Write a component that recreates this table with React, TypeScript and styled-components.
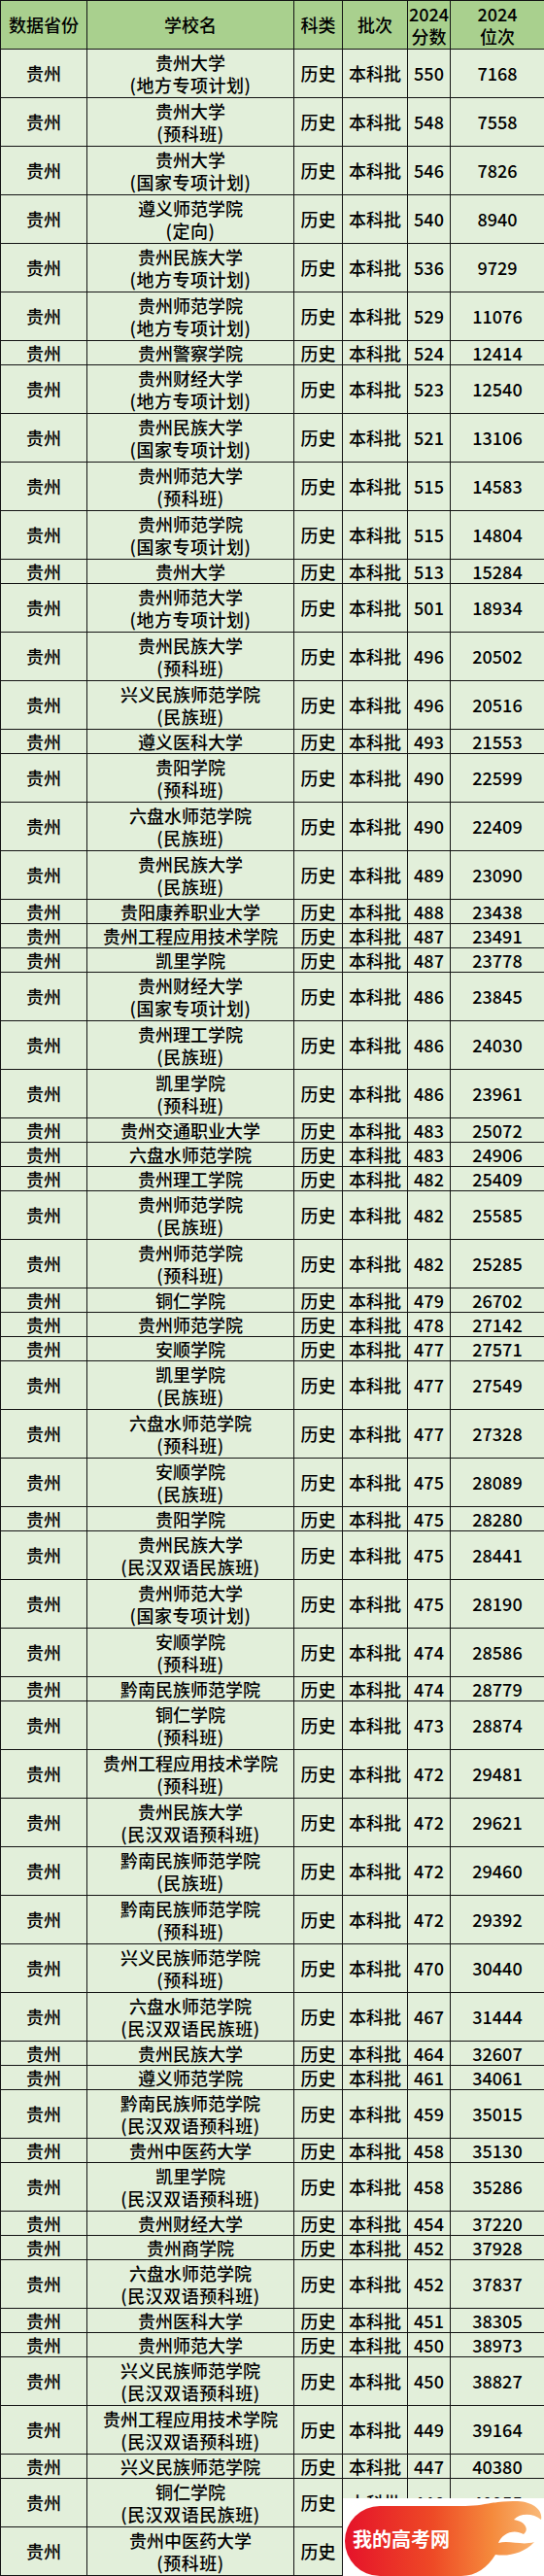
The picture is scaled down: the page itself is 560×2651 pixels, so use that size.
import styled, { createGlobalStyle } from "styled-components";

const GlobalStyle = createGlobalStyle`
  html, body {
    margin: 0;
    padding: 0;
    background: #ffffff;
  }
  body {
    font-family: "Noto Sans CJK SC", "Noto Sans", sans-serif;
    color: #000;
  }
`;

const Page = styled.div`
  position: relative;
  width: 560px;
`;

const Table = styled.div`
  display: flex;
  flex-direction: column;
  gap: 1px;
  padding: 1px 0 1px 1px;
  background: #141414;
`;

const Row = styled.div<{ $tall: boolean }>`
  display: grid;
  grid-template-columns: 88px 212px 49px 66px 43px 96px;
  column-gap: 1px;
  height: ${(p) => (p.$tall ? 49 : 24)}px;
`;

const Cell = styled.div<{ $head?: boolean }>`
  display: flex;
  flex-direction: column;
  align-items: center;
  justify-content: center;
  text-align: center;
  background: ${(p) => (p.$head ? "#a9d08e" : "#e2efda")};
  font-size: 18px;
  font-weight: 500;
  line-height: 23px;
  white-space: nowrap;
  overflow: hidden;
`;

const Note = styled.span`
  letter-spacing: 0.5px;
`;

const Logo = styled.div`
  position: absolute;
  right: 0;
  bottom: 0;
  width: 207px;
  height: 80px;
  background: #ffffff;
`;

type School = [string, string | null, string, string];

const rows: School[] = [
  ["贵州大学", "(地方专项计划)", "550", "7168"],
  ["贵州大学", "(预科班)", "548", "7558"],
  ["贵州大学", "(国家专项计划)", "546", "7826"],
  ["遵义师范学院", "(定向)", "540", "8940"],
  ["贵州民族大学", "(地方专项计划)", "536", "9729"],
  ["贵州师范学院", "(地方专项计划)", "529", "11076"],
  ["贵州警察学院", null, "524", "12414"],
  ["贵州财经大学", "(地方专项计划)", "523", "12540"],
  ["贵州民族大学", "(国家专项计划)", "521", "13106"],
  ["贵州师范大学", "(预科班)", "515", "14583"],
  ["贵州师范学院", "(国家专项计划)", "515", "14804"],
  ["贵州大学", null, "513", "15284"],
  ["贵州师范大学", "(地方专项计划)", "501", "18934"],
  ["贵州民族大学", "(预科班)", "496", "20502"],
  ["兴义民族师范学院", "(民族班)", "496", "20516"],
  ["遵义医科大学", null, "493", "21553"],
  ["贵阳学院", "(预科班)", "490", "22599"],
  ["六盘水师范学院", "(民族班)", "490", "22409"],
  ["贵州民族大学", "(民族班)", "489", "23090"],
  ["贵阳康养职业大学", null, "488", "23438"],
  ["贵州工程应用技术学院", null, "487", "23491"],
  ["凯里学院", null, "487", "23778"],
  ["贵州财经大学", "(国家专项计划)", "486", "23845"],
  ["贵州理工学院", "(民族班)", "486", "24030"],
  ["凯里学院", "(预科班)", "486", "23961"],
  ["贵州交通职业大学", null, "483", "25072"],
  ["六盘水师范学院", null, "483", "24906"],
  ["贵州理工学院", null, "482", "25409"],
  ["贵州师范学院", "(民族班)", "482", "25585"],
  ["贵州师范学院", "(预科班)", "482", "25285"],
  ["铜仁学院", null, "479", "26702"],
  ["贵州师范学院", null, "478", "27142"],
  ["安顺学院", null, "477", "27571"],
  ["凯里学院", "(民族班)", "477", "27549"],
  ["六盘水师范学院", "(预科班)", "477", "27328"],
  ["安顺学院", "(民族班)", "475", "28089"],
  ["贵阳学院", null, "475", "28280"],
  ["贵州民族大学", "(民汉双语民族班)", "475", "28441"],
  ["贵州师范大学", "(国家专项计划)", "475", "28190"],
  ["安顺学院", "(预科班)", "474", "28586"],
  ["黔南民族师范学院", null, "474", "28779"],
  ["铜仁学院", "(预科班)", "473", "28874"],
  ["贵州工程应用技术学院", "(预科班)", "472", "29481"],
  ["贵州民族大学", "(民汉双语预科班)", "472", "29621"],
  ["黔南民族师范学院", "(民族班)", "472", "29460"],
  ["黔南民族师范学院", "(预科班)", "472", "29392"],
  ["兴义民族师范学院", "(预科班)", "470", "30440"],
  ["六盘水师范学院", "(民汉双语民族班)", "467", "31444"],
  ["贵州民族大学", null, "464", "32607"],
  ["遵义师范学院", null, "461", "34061"],
  ["黔南民族师范学院", "(民汉双语预科班)", "459", "35015"],
  ["贵州中医药大学", null, "458", "35130"],
  ["凯里学院", "(民汉双语预科班)", "458", "35286"],
  ["贵州财经大学", null, "454", "37220"],
  ["贵州商学院", null, "452", "37928"],
  ["六盘水师范学院", "(民汉双语预科班)", "452", "37837"],
  ["贵州医科大学", null, "451", "38305"],
  ["贵州师范大学", null, "450", "38973"],
  ["兴义民族师范学院", "(民汉双语预科班)", "450", "38827"],
  ["贵州工程应用技术学院", "(民汉双语预科班)", "449", "39164"],
  ["兴义民族师范学院", null, "447", "40380"],
  ["铜仁学院", "(民汉双语民族班)", "446", "40955"],
  ["贵州中医药大学", "(预科班)", "445", "41366"],
];

const LogoMark = () => (
  <svg width="207" height="80" viewBox="0 0 207 80">
    <defs>
      <linearGradient id="flame" x1="0" y1="0" x2="1" y2="0">
        <stop offset="0" stopColor="#e5122a" />
        <stop offset="0.45" stopColor="#ee4a26" />
        <stop offset="0.75" stopColor="#f58a3c" />
        <stop offset="1" stopColor="#f9b978" />
      </linearGradient>
    </defs>
    <path
      d="M38 8 L126 8 C146 8 158 2 180 3 C196 4 206 12 204 22 C196 15 182 15 176 22 C188 24 192 32 186 37 C176 31 164 36 160 46 C172 43 184 49 197 45 C186 57 170 60 157 58 C149 71 137 80 122 80 L38 80 A36 36 0 0 1 38 8 Z"
      fill="url(#flame)"
    />
    <text
      x="60"
      y="50"
      textAnchor="middle"
      fontFamily="'Noto Sans CJK SC', sans-serif"
      fontWeight="700"
      fontSize="20"
      fill="#ffffff"
    >
      我的高考网
    </text>
  </svg>
);

const App = () => {
  return (
    <Page>
      <GlobalStyle />
      <Table>
        <Row $tall>
          <Cell $head>数据省份</Cell>
          <Cell $head>学校名</Cell>
          <Cell $head>科类</Cell>
          <Cell $head>批次</Cell>
          <Cell $head>
            <span>2024</span>
            <span>分数</span>
          </Cell>
          <Cell $head>
            <span>2024</span>
            <span>位次</span>
          </Cell>
        </Row>
        {rows.map(([name, note, score, rank], i) => (
          <Row key={i} $tall={note !== null}>
            <Cell>贵州</Cell>
            <Cell>
              <span>{name}</span>
              {note && <Note>{note}</Note>}
            </Cell>
            <Cell>历史</Cell>
            <Cell>本科批</Cell>
            <Cell>{score}</Cell>
            <Cell>{rank}</Cell>
          </Row>
        ))}
      </Table>
      <Logo>
        <LogoMark />
      </Logo>
    </Page>
  );
};

export default App;
